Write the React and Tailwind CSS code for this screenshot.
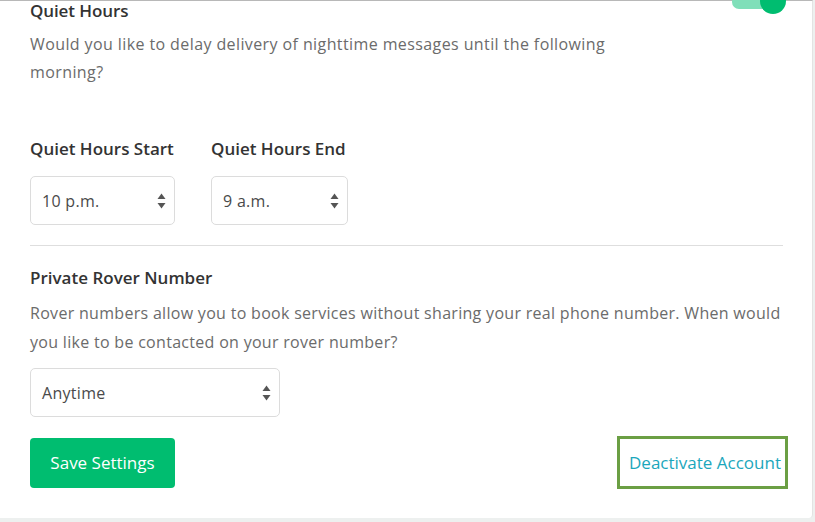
import React from "react";

function Arrows() {
  return (
    <svg width="9" height="16" viewBox="0 0 9 16" className="shrink-0">
      <path d="M4.5 0.5 L8.5 6 L0.5 6 Z" fill="#555" />
      <path d="M4.5 15.5 L8.5 10 L0.5 10 Z" fill="#555" />
    </svg>
  );
}

function Select({ value, width }) {
  return (
    <div
      className={`${width} h-[49px] border border-[#dcdcdc] rounded-[5px] bg-white flex items-center justify-between pl-[11px] pr-[8px] text-[16px] tracking-[0.3px] text-[#4a4a4a]`}
    >
      <span>{value}</span>
      <Arrows />
    </div>
  );
}

export default function App() {
  return (
    <div
      className="w-[815px] h-[522px] bg-[#edf0ef] overflow-hidden"
      style={{ fontFamily: "'Open Sans', Lato, sans-serif" }}
    >
      <div className="w-[813px] h-[518px] bg-white border-t border-[#b8b8b8] border-r border-r-[#e3e3e3] rounded-br-[4px] pl-[30px] pr-[30px] flex flex-col">
        <div className="flex items-start justify-between h-[21px]">
          <h2 className="text-[17px] leading-[20px] font-semibold text-[#333] tracking-[-0.1px]">Quiet Hours</h2>
          <div className="relative w-[54px] h-[18px] -mt-[9px] mr-[-4px]">
            <div className="absolute left-0 top-[3px] w-[44px] h-[14px] rounded-full bg-[#80dfb9]" />
            <div className="absolute right-0 top-0 w-[26px] h-[26px] -mt-[4px] rounded-full bg-[#00bd70]" />
          </div>
        </div>
        <p className="mt-[8px] text-[16px] leading-[28px] text-[#6b6b6b] w-[600px] tracking-[0.4px]">
          Would you like to delay delivery of nighttime messages until the following morning?
        </p>
        <div className="flex gap-[36px] mt-[53px]">
          <div className="flex flex-col">
            <label className="text-[17px] leading-[20px] font-semibold text-[#333]">Quiet Hours Start</label>
            <div className="mt-[17px]">
              <Select value="10 p.m." width="w-[145px]" />
            </div>
          </div>
          <div className="flex flex-col">
            <label className="text-[17px] leading-[20px] font-semibold text-[#333]">Quiet Hours End</label>
            <div className="mt-[17px]">
              <Select value="9 a.m." width="w-[137px]" />
            </div>
          </div>
        </div>
        <div className="mt-[20px] h-px bg-[#dedede] w-[753px]" />
        <label className="mt-[22px] text-[17px] leading-[20px] font-semibold text-[#333]">Private Rover Number</label>
        <p className="mt-[11px] text-[16px] leading-[29px] text-[#6b6b6b] tracking-[0.3px] w-[768px]">
          Rover numbers allow you to book services without sharing your real phone number. When would you like to be contacted on your rover number?
        </p>
        <div className="mt-[11px]">
          <Select value="Anytime" width="w-[250px]" />
        </div>
        <div className="mt-[19px] flex items-center justify-between">
          <button className="w-[145px] h-[50px] rounded-[4px] bg-[#00bd70] text-white text-[17px] font-medium">
            Save Settings
          </button>
          <div className="mr-[-6px] w-[171px] h-[53px] border-[3px] border-[#6b9f44] flex items-center justify-end pr-[4px]">
            <span className="text-[#1ba7bc] text-[17px]">Deactivate Account</span>
          </div>
        </div>
      </div>
    </div>
  );
}
